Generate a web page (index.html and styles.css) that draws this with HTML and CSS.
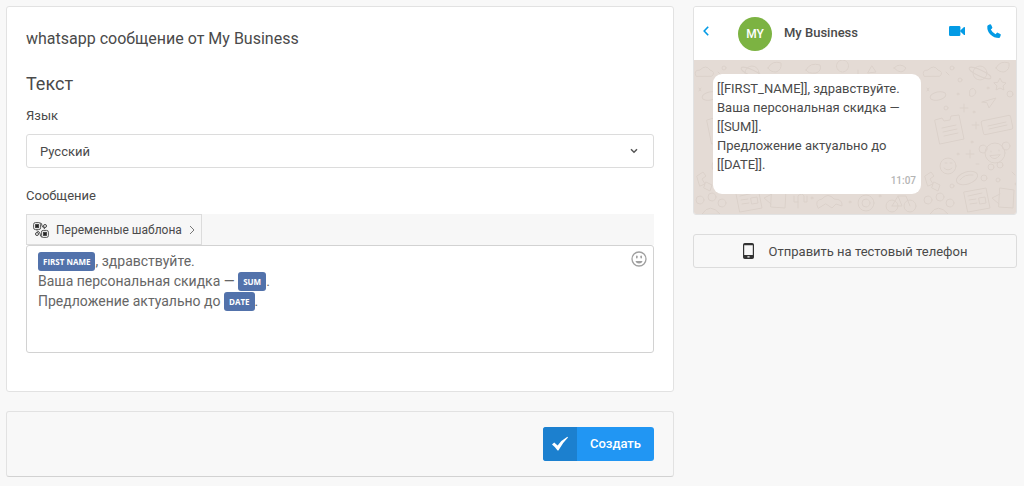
FILE: index.html
```html
<!DOCTYPE html>
<html lang="ru">
<head>
    <meta charset="UTF-8">
    <meta name="viewport" content="width=device-width, initial-scale=1.0">
    <title>My Business</title>
    <link rel="stylesheet" href="styles.css">
</head>
<body>
    <div class="page">
        <main class="main">
            <section class="card">
                <h1 class="card-title">whatsapp сообщение от My Business</h1>
                <h2 class="section-title">Текст</h2>

                <label class="label" for="language">Язык</label>
                <div class="select-wrap">
                    <select class="select" id="language">
                        <option>Русский</option>
                    </select>
                    <svg class="select-arrow" width="8" height="6" viewBox="0 0 8 6"><path d="M1 1.2 L4 4.2 L7 1.2" fill="none" stroke="#555" stroke-width="1.5"/></svg>
                </div>

                <span class="label" id="messageLabel">Сообщение</span>
                <div class="toolbar">
                    <button type="button" class="variables">
                        <svg width="16" height="16" viewBox="0 0 16 16" fill="none" stroke="#444">
                            <rect x="0.6" y="0.6" width="7" height="7" rx="1.8" stroke-width="0.9"/>
                            <rect x="2.6" y="2.6" width="3" height="3" fill="#222"/>
                            <rect x="8.4" y="8.4" width="7" height="7" rx="1.8" stroke-width="0.9"/>
                            <rect x="10.4" y="10.4" width="3" height="3" fill="#222"/>
                            <circle cx="12" cy="4" r="1.5"/>
                            <circle cx="4" cy="12" r="1.5"/>
                            <path d="M7.6 0.8 Q9 1.4 8.8 3 Q9 5.4 12 6.8 M3.6 8.8 Q6.8 9.4 7.2 12 Q7 14.6 8.8 15.2" stroke-width="0.9"/>
                        </svg>
                        <span>Переменные шаблона</span>
                        <svg width="6" height="10" viewBox="0 0 6 10"><path d="M1 1 L5 5 L1 9" fill="none" stroke="#777"/></svg>
                    </button>
                </div>
                <div class="editor">
                    <div class="editor-text" contenteditable="true" role="textbox" aria-multiline="true" aria-labelledby="messageLabel" spellcheck="false"><div><span class="tag" contenteditable="false">FIRST NAME</span>, здравствуйте.</div><div>Ваша персональная скидка — <span class="tag" contenteditable="false">SUM</span>.</div><div>Предложение актуально до <span class="tag" contenteditable="false">DATE</span>.</div></div>
                    <button type="button" class="emoji" aria-label="Эмодзи">
                        <svg width="16" height="16" viewBox="0 0 16 16">
                            <circle cx="8" cy="8" r="7" fill="none" stroke="#a0a0a0" stroke-width="1.3"/>
                            <rect x="5" y="4.4" width="1.6" height="3.2" rx="0.8" fill="#a0a0a0"/>
                            <rect x="9.4" y="4.4" width="1.6" height="3.2" rx="0.8" fill="#a0a0a0"/>
                            <path d="M4.4 10 H11.6 Q10.8 12.6 8 12.6 Q5.2 12.6 4.4 10 Z" fill="#a0a0a0"/>
                        </svg>
                    </button>
                </div>
            </section>

            <section class="actions">
                <button type="button" class="create">
                    <span class="create-icon">
                        <svg width="18" height="16" viewBox="0 0 18 16"><path d="M1 8.4 L3.2 6.4 L6.6 9.4 Q10.6 4 16.4 0.8 L17 1.6 Q11.4 7 7.4 14.6 H6.6 Q4.4 11 1 8.4 Z" fill="#fff"/></svg>
                    </span>
                    <span class="create-text">Создать</span>
                </button>
            </section>
        </main>

        <aside class="side">
            <div class="phone">
                <header class="chat-head">
                    <button type="button" class="icon-button" aria-label="Назад">
                        <svg width="6" height="10" viewBox="0 0 6 10"><path d="M5.2 0.8 L1.2 5 L5.2 9.2" fill="none" stroke="#039be5" stroke-width="1.6"/></svg>
                    </button>
                    <span class="avatar">MY</span>
                    <span class="chat-name">My Business</span>
                    <button type="button" class="icon-button" aria-label="Видеозвонок">
                        <svg width="16" height="10" viewBox="0 0 16 10" fill="#039be5"><rect width="11.4" height="10" rx="1.2"/><path d="M10.8 5 L15 1 Q16 0.6 16 1.6 V8.4 Q16 9.4 15 9 Z"/></svg>
                    </button>
                    <button type="button" class="icon-button" aria-label="Позвонить">
                        <svg width="14" height="14" viewBox="0 0 14 14"><path d="M1 1.2 L3 0.2 Q3.8 0 4.1 0.7 L5.3 3.3 Q5.5 3.9 5 4.4 L3.8 5.4 Q5.2 8.4 8.6 10.2 L9.7 8.9 Q10.1 8.4 10.7 8.7 L13.3 9.9 Q14 10.2 13.8 10.9 L13 13.2 Q12.7 13.9 12 14 Q7 14 3.4 10.5 Q0 7 0.3 2.2 Q0.4 1.5 1 1.2 Z" fill="#039be5"/></svg>
                    </button>
                </header>
                <div class="chat">
                    <svg class="wallpaper" width="100%" height="100%" aria-hidden="true">
                        <defs>
                            <pattern id="doodles" width="228" height="156" patternUnits="userSpaceOnUse">
                                <g fill="none" stroke="#dbd1ca" stroke-linecap="round" stroke-linejoin="round">
                                    <!-- top: cloud, planet, cap, star -->
                                    <path d="M2 16 q-3 -6 4 -6 q6 -6 10 0 q6 2 2 6 Z"/>
                                    <circle cx="58" cy="13" r="7"/><ellipse cx="58" cy="13" rx="12" ry="3" transform="rotate(25 58 13)"/>
                                    <path d="M74 8 q4 -8 13 -5 q1 7 -5 9 q-6 0 -8 -4 Z"/>
                                    <path d="M76 22 l2 -4 2 4 4 1 -3 3 1 4 -4 -2 -4 2 1 -4 -3 -3 Z"/>
                                    <path d="M112 10 q4 -8 14 -5 q2 6 -4 8 q-8 1 -10 -3 Z M148 12 a6 6 0 1 1 1 0 M178 6 l4 6 -8 1 Z M200 8 q6 -6 12 0 q-4 8 -12 0 Z"/>
                                    <!-- cloud, plane, ticket, calendar -->
                                    <ellipse cx="16" cy="36" rx="8" ry="4" transform="rotate(-12 16 36)"/>
                                    <path d="M60 42 l14 -4 -7 10 -2 -5 Z M48 30 q4 -4 6 2 q-2 6 -6 4 Z"/>
                                    <rect x="60" y="58" width="30" height="14" rx="2" transform="rotate(-12 75 65)"/><path d="M66 66 l18 -4 M67 69 l18 -4"/>
                                    <path d="M13 60 l7 -2 2 3 6 -1 1 -4 8 -1 5 24 -24 5 Z M20 68 l14 -3 M21 72 l14 -3 M22 76 l14 -3"/>
                                    <!-- monkey, face, leaf -->
                                    <circle cx="73" cy="93" r="10"/><circle cx="61" cy="89" r="4"/><circle cx="84" cy="86" r="4"/><path d="M68 96 q5 6 10 -1 Z M69 91 v1 M77 90 v1"/><circle cx="69" cy="107" r="3"/><circle cx="78" cy="105" r="3"/>
                                    <circle cx="26" cy="106" r="8"/><path d="M22 108 q4 4 8 0 M23 103 h2 M28 103 h2"/>
                                    <ellipse cx="45" cy="118" rx="11" ry="6" transform="rotate(-18 45 118)"/><path d="M38 120 q4 -6 13 -5"/>
                                    <path d="M3 116 l6 -4 3 4 -4 3 3 5 -5 2 Z M12 122 l6 3 -2 6 -6 -3 Z"/>
                                    <!-- news page, cup, paw -->
                                    <path d="M42 132 l22 -4 4 20 -22 4 Z M46 136 l14 -3 M47 140 l7 -1 M48 144 l7 -1 M57 138 l6 -1 1 6 -6 1 Z"/>
                                    <path d="M78 128 l14 2 -1 18 -14 -1 Z M78 134 l-8 4 7 6"/>
                                    <circle cx="6" cy="140" r="4"/><circle cx="18" cy="137" r="4"/><circle cx="28" cy="143" r="4"/><path d="M8 154 q8 -12 18 0 Z"/>
                                    <!-- bottom: cactus, cloud, wheel, bicycle -->
                                    <path d="M104 148 v-12 q4 -4 6 0 v6 h3 v-6 M104 142 h-4 v-6 M124 148 q-4 -8 4 -9 q6 -7 12 0 q9 0 8 7 l-6 -2 -4 4 -6 -4 Z"/>
                                    <circle cx="172" cy="143" r="8"/><circle cx="172" cy="143" r="4"/>
                                    <circle cx="198" cy="146" r="6"/><circle cx="216" cy="146" r="6"/><path d="M198 146 l6 -10 h8 l4 10 M204 136 l4 10 h-10"/>
                                    <!-- small marks between the drawings -->
                                    <path d="M5 28 l2 3 M7 28 l-2 3 M42 44 v8 M38 48 h8 M54 62 v7 M50 65 h7 M48 90 v8 M44 94 h8 M90 112 l3 3 M54 104 h3 M24 12 l3 3 M134 20 h4 M164 10 v4"/>
                                    <circle cx="30" cy="8" r="2"/><circle cx="38" cy="20" r="2"/><circle cx="66" cy="28" r="1"/><circle cx="88" cy="34" r="3"/><circle cx="36" cy="34" r="1"/><circle cx="24" cy="48" r="2"/><circle cx="52" cy="52" r="1"/><circle cx="50" cy="82" r="1"/><circle cx="36" cy="94" r="1"/><circle cx="62" cy="118" r="3"/><circle cx="76" cy="120" r="2"/><circle cx="30" cy="126" r="2"/><circle cx="94" cy="124" r="1"/><circle cx="156" cy="142" r="1"/><circle cx="186" cy="136" r="1"/><circle cx="118" cy="138" r="1"/>
                                </g>
                            </pattern>
                        </defs>
                        <rect width="100%" height="100%" fill="url(#doodles)"/>
                    </svg>
                    <div class="bubble">
                        <p class="bubble-text">[[FIRST_NAME]], здравствуйте.<br>Ваша персональная скидка — [[SUM]].<br>Предложение актуально до [[DATE]].</p>
                        <time class="bubble-time">11:07</time>
                    </div>
                </div>
            </div>

            <button type="button" class="test">
                <svg width="11" height="16" viewBox="0 0 11 16"><path fill-rule="evenodd" d="M1.8 0 H9.2 Q11 0 11 1.8 V14.2 Q11 16 9.2 16 H1.8 Q0 16 0 14.2 V1.8 Q0 0 1.8 0 Z M1.2 2.2 V12 H9.8 V2.2 Z M4.4 13.2 V14.6 H6.6 V13.2 Z" fill="#333"/></svg>
                <span>Отправить на тестовый телефон</span>
            </button>
        </aside>
    </div>
</body>
</html>
```
FILE: styles.css
```css
* {
    box-sizing: border-box;
}
body {
    margin: 0;
    padding: 6px 7px 6px 6px;
    background: #f8f8f8;
    color: #4a4a4a;
    font-family: Roboto, "Liberation Sans", sans-serif;
    font-size: 13px;
}
button, select {
    font-family: inherit;
    font-size: inherit;
    color: inherit;
    cursor: pointer;
}
svg {
    display: block;
    flex: none;
}
.page {
    display: grid;
    grid-template-columns: minmax(0, 1fr) 324px;
    gap: 19px;
    align-items: start;
}
.main, .side {
    display: flex;
    flex-direction: column;
    gap: 19px;
}
.card {
    padding: 19px 19px 38px;
    background: #fff;
    border: 1px solid #e2e2e2;
    border-radius: 3px;
}
.card-title {
    margin: 0 0 20px;
    font-size: 16px;
    line-height: 25px;
    font-weight: 400;
}
.section-title {
    margin: 0 0 10px;
    font-size: 18px;
    line-height: 25px;
    font-weight: 400;
}
.label {
    display: block;
    margin-bottom: 8px;
    line-height: 20px;
}
.select-wrap {
    position: relative;
    margin-bottom: 18px;
}
.select {
    display: block;
    width: 100%;
    height: 34px;
    padding: 0 13px;
    background: #fff;
    border: 1px solid #dcdcdc;
    border-radius: 3px;
    appearance: none;
}
.select-arrow {
    position: absolute;
    top: 14px;
    right: 16px;
    pointer-events: none;
}
.toolbar {
    display: flex;
    background: #f7f7f7;
}
.variables {
    display: flex;
    align-items: center;
    height: 31px;
    padding: 0 6px;
    gap: 7px;
    background: #f7f7f7;
    border: 1px solid #dcdcdc;
    font-size: 12px;
}
.editor {
    display: flex;
    align-items: flex-start;
    min-height: 108px;
    padding: 5px 6px 5px 11px;
    background: #fff;
    border: 1px solid #d2d2d2;
    border-radius: 3px;
}
.editor-text {
    flex: 1;
    font-size: 14px;
    line-height: 20px;
    color: #666;
    outline: none;
}
.tag {
    padding: 4px 5px;
    background: #5272ab;
    border-radius: 3px;
    color: #fff;
    font-family: "Open Sans", sans-serif;
    font-size: 8px;
    line-height: 1;
    font-weight: 700;
    vertical-align: middle;
}
.emoji, .icon-button {
    padding: 0;
    background: none;
    border: none;
}
.actions {
    display: flex;
    justify-content: flex-end;
    padding: 15px 19px;
    border: 1px solid #e2e2e2;
    border-bottom-color: #d2d2d2;
    border-radius: 3px;
}
.create {
    display: flex;
    align-items: stretch;
    height: 34px;
    padding: 0;
    background: #2196f3;
    border: none;
    border-radius: 3px;
    color: #fff;
    font-weight: 500;
    overflow: hidden;
}
.create-icon {
    display: flex;
    align-items: center;
    justify-content: center;
    width: 34px;
    background: #1c80cf;
}
.create-text {
    padding: 0 13px;
    line-height: 34px;
}
.phone {
    border: 1px solid #e2e2e2;
    border-radius: 3px;
    overflow: hidden;
}
.chat-head {
    display: flex;
    align-items: center;
    height: 53px;
    padding: 0 15px 0 9px;
    background: #fff;
}
.icon-button {
    padding-bottom: 6px;
}
.icon-button + .icon-button {
    margin-left: 22px;
}
.avatar {
    width: 34px;
    margin: 0 12px 0 29px;
    border-radius: 50%;
    background: #7cb342;
    color: #fff;
    font-size: 12px;
    line-height: 34px;
    font-weight: 500;
    text-align: center;
}
.chat-name {
    flex: 1;
    padding-bottom: 2px;
    font-size: 13px;
    font-weight: 500;
}
.chat {
    position: relative;
    padding: 14px 19px 20px;
    background: #e4dbd5;
}
.wallpaper {
    position: absolute;
    inset: 0;
}
.bubble {
    position: relative;
    width: 208px;
    padding: 5px 5px 6px 4px;
    background: #fff;
    border-radius: 9px;
}
.bubble-text {
    margin: 0;
    line-height: 19px;
}
.bubble-time {
    display: block;
    color: #b4b4b4;
    font-size: 10px;
    line-height: 14px;
    font-weight: 500;
    text-align: right;
}
.test {
    display: flex;
    align-items: center;
    justify-content: center;
    gap: 15px;
    height: 34px;
    background: #f8f8f8;
    border: 1px solid #dcdcdc;
    border-radius: 3px;
}
```
